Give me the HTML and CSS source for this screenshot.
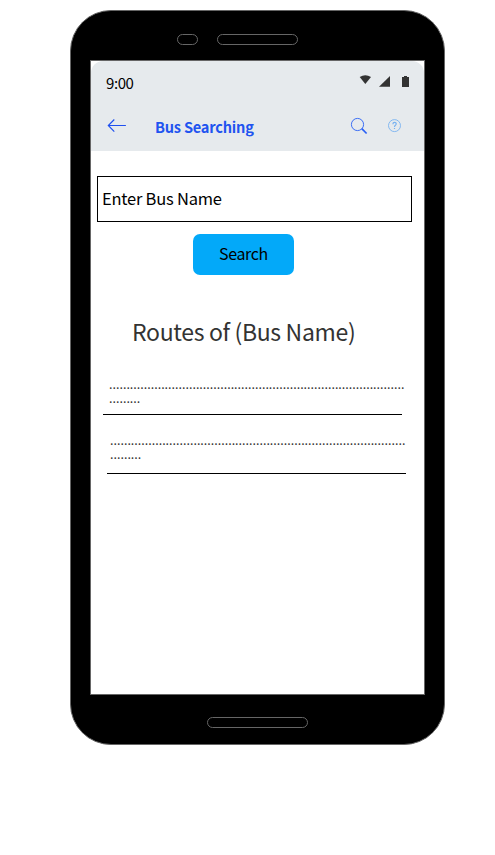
FILE: index.html
```html
<!DOCTYPE html>
<html lang="en">
<head>
<meta charset="utf-8">
<title>Bus Searching</title>
<link rel="stylesheet" href="styles.css">
</head>
<body>
<div class="phone">
  <div class="phone-top"><span class="sensor"></span><span class="speaker"></span></div>
  <main class="screen">
    <header class="header">
      <div class="status">
        <span class="time">9:00</span>
        <svg class="status-icons" width="52" height="14" viewBox="0 0 52 14" fill="#333">
          <path d="M1.7 2.9Q7.3-.6 13 2.9L7.3 9.9Z"/>
          <path d="M32 2V12.8H21Z"/>
          <path d="M44 3H46V2H49V3H51V13H44Z"/>
        </svg>
      </div>
      <div class="bar">
        <svg class="back" width="20" height="14" viewBox="0 0 20 14" fill="none" stroke="#1f50f0"><path d="M7.3 .5L1.3 6.5L7.3 12.6M1.3 6.5H18.9" stroke-width="1.15"/></svg>
        <h1 class="title">Bus Searching</h1>
        <svg class="find" width="18" height="18" viewBox="0 0 18 18" fill="none" stroke="#2860f5"><circle cx="7.5" cy="7.5" r="6.1" stroke-width=".9"/><path d="M11.8 11.7L16.6 16.5" stroke-width="1.7"/></svg>
        <svg class="help" width="14" height="14" viewBox="0 0 14 14" fill="none" stroke="#78b2f0"><circle cx="7.5" cy="6.6" r="6" stroke-width=".9"/><path d="M5.9 5.2C5.9 2.8 9.3 2.9 9.2 5C9.1 6.4 7.5 6.2 7.5 8M7.5 8.9V10.1" stroke-width="1.2"/></svg>
      </div>
    </header>
    <div class="field">Enter Bus Name</div>
    <button class="search">Search</button>
    <h2 class="heading">Routes of (Bus Name)</h2>
    <div class="route">.....................................................................................<br>.........</div>
    <div class="route second">.....................................................................................<br>.........</div>
  </main>
  <div class="phone-bottom"><span class="home"></span></div>
</div>
</body>
</html>
```

FILE: styles.css
```css
* { box-sizing: border-box; }
body { margin: 0; padding: 10px 0 0 70px; background: #fff; color: #000; font-family: "Noto Sans CJK SC", "Noto Sans", sans-serif; }
svg { display: block; }
.phone { width: 375px; height: 735px; background: #000; border: 1px solid #666; border-radius: 41px; }
.phone-top { height: 49px; padding: 23px 0 0 106px; display: flex; gap: 19px; }
.sensor, .speaker, .home { height: 11px; border: 1px solid #666; border-radius: 6px; }
.sensor { width: 21px; }
.speaker { width: 81px; }
.screen { width: 335px; height: 635px; margin-left: 19px; border: 1px solid #666; background: #fff; display: flex; flex-direction: column; }
.header { height: 90px; background: #e6eaed; border-radius: 12px 12px 0 0; }
.status { height: 46px; padding: 13px 14px 0 15px; display: flex; justify-content: space-between; }
.time { font-size: 15px; letter-spacing: -.4px; line-height: 18px; }
.bar { display: flex; height: 44px; padding-left: 16px; }
.back { margin-top: 12px; }
.title { margin: 10px 0 0 28px; width: 195px; font-size: 14.6px; letter-spacing: -.22px; line-height: 20px; font-weight: 700; color: #1f54f0; }
.find { margin-top: 10px; }
.help { margin: 12px 0 0 19px; }
.field { width: 315px; height: 46px; margin: 25px 0 0 6px; padding-left: 4px; border: 1px solid #000; font-size: 16.5px; letter-spacing: -.23px; line-height: 42px; }
.search { width: 101px; height: 41px; margin: 12px 0 0 102px; padding: 0 0 2px; border: 0; border-radius: 7px; background: #03a9f9; font: 16px/39px "Noto Sans CJK SC", "Noto Sans", sans-serif; letter-spacing: -.38px; color: #000; }
.heading { margin: 38px 0 0 41px; font-size: 23px; letter-spacing: -.33px; font-weight: 400; line-height: 36px; color: #333; white-space: nowrap; }
.route { width: 299px; height: 40px; margin: 26px 0 0 12px; padding: 2px 0 0 6px; border-bottom: 1px solid #000; font-size: 12.5px; line-height: 14px; color: #333; white-space: nowrap; }
.second { margin: 17px 0 0 16px; height: 42px; padding: 1px 0 0 3px; }
.phone-bottom { padding: 22px 0 0 136px; display: flex; }
.home { width: 101px; }
```
